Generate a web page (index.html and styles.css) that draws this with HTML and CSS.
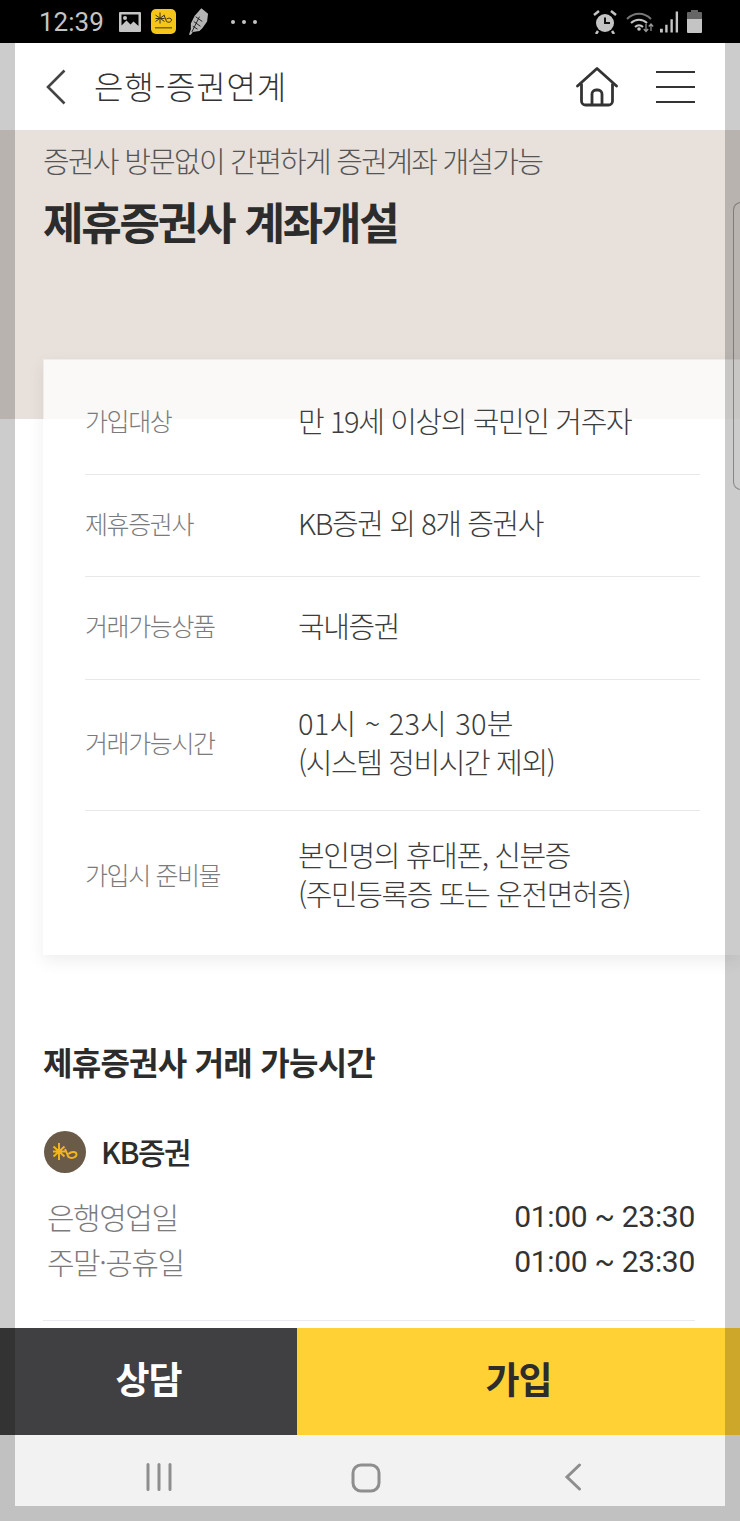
FILE: index.html
```html
<!DOCTYPE html>
<html lang="ko">
<head>
  <meta charset="UTF-8">
  <meta name="viewport" content="width=device-width, initial-scale=1.0">
  <title>제휴증권사 계좌개설</title>
  <link rel="stylesheet" href="styles.css">
</head>
<body>
  <div class="phone">
    <div class="status-bar">
      <span class="clock">12:39</span>
      <svg class="st-pic" viewBox="0 0 22 20"><path fill="#c4c4c4" fill-rule="evenodd" d="M1 0h20a1 1 0 0 1 1 1v18a1 1 0 0 1-1 1H1a1 1 0 0 1-1-1V1a1 1 0 0 1 1-1zm1.500 2.500v11l5-5 4 4 3-3 5 4.500V2.500z"/><circle cx="6" cy="6" r="2" fill="#c4c4c4"/></svg>
      <svg class="st-kb" viewBox="0 0 25 25"><rect width="25" height="25" rx="5" fill="#f5c518"/><path d="M9 3.500v11M4.500 6l9 6.500M13.500 6l-9 6.500M4.500 9.500h9" stroke="#3c3320" stroke-width="1" fill="none"/><path d="M13 6l2.500 6.500c2 1.500 5 .5 5-1.500s-3-2.500-5-1" stroke="#3c3320" stroke-width="1" fill="none"/><rect x="4" y="18" width="17" height="1.500" fill="#7a6620"/></svg>
      <svg class="st-feather" viewBox="0 0 22 28"><path fill="#b5b5b5" d="M14 0l7 6-1 8-5 7-3 3-7 1-2 3H1l2-6v-6l4-8z"/><path d="M4 25L12 9M8 9l7 5M6 14l7 5M5 19l5 3" stroke="#222" stroke-width="1" fill="none"/></svg>
      <span class="st-dots"><i></i><i></i><i></i></span>
      <span class="st-right">
        <svg class="st-alarm" viewBox="0 0 24 24"><circle cx="12" cy="13" r="9" fill="#c4c4c4"/><path d="M12 7.500V13h5" stroke="#111" stroke-width="2" fill="none"/><path d="M1 5l5-4M23 5l-5-4M5 21l-2 3M19 21l2 3" stroke="#c4c4c4" stroke-width="2.500" fill="none"/></svg>
        <svg class="st-wifi" viewBox="0 0 28 22"><path d="M1 8c7-7 17-7 24 0" stroke="#777" stroke-width="2" fill="none"/><path d="M5 12c4.500-4.500 11.500-4.500 16 0M9 16c2.500-2.500 5.500-2.500 8 0" stroke="#c4c4c4" stroke-width="2" fill="none"/><circle cx="13" cy="18" r="1.800" fill="#c4c4c4"/><path d="M20 13v7M17.800 18l2.200 2.500 2.200-2.500M25 20v-7M22.800 15.500l2.200-2.500 2.200 2.500" stroke="#999" stroke-width="1.200" fill="none"/></svg>
        <svg class="st-signal" viewBox="0 0 20 22"><path fill="#c4c4c4" d="M0 18h3v4H0zM5.500 14h2.500v8H5.500zM11 8h2.500v14H11zM16.500 0H19v22h-2.500z"/></svg>
        <svg class="st-batt" viewBox="0 0 15 23"><path fill="#666" d="M4 0h7v2h3a1 1 0 0 1 1 1v6H0V3a1 1 0 0 1 1-1h3z"/><path fill="#c4c4c4" d="M0 9h15v13a1 1 0 0 1-1 1H1a1 1 0 0 1-1-1z"/></svg>
      </span>
    </div>

    <header class="app-header">
      <svg class="back-icon" viewBox="0 0 20 36"><path d="M18.500 1.500L2 18l16.500 16.500" stroke="#444" stroke-width="2.600" fill="none"/></svg>
      <h1 class="page-title">은행-증권연계</h1>
      <svg class="home-icon" viewBox="0 0 42 40"><path d="M1.500 19L21 1.500 40.500 19" stroke="#333" stroke-width="2.800" fill="none" stroke-linecap="round" stroke-linejoin="round"/><path d="M5.500 16.500V34a4 4 0 0 0 4 4h23a4 4 0 0 0 4-4V16.500" stroke="#333" stroke-width="2.800" fill="none"/><path d="M16 38V27a4 4 0 0 1 4-4h2a4 4 0 0 1 4 4v11" stroke="#333" stroke-width="2.800" fill="none"/></svg>
      <div class="menu-icon"><i></i><i></i><i></i></div>
    </header>

    <main class="content">
      <section class="band">
        <p class="band-sub">증권사 방문없이 간편하게 증권계좌 개설가능</p>
        <h2 class="band-title">제휴증권사 계좌개설</h2>
      </section>

      <section class="info-card">
        <div class="info-row">
          <div class="info-label">가입대상</div>
          <div class="info-value">만 19세 이상의 국민인 거주자</div>
        </div>
        <div class="info-row">
          <div class="info-label">제휴증권사</div>
          <div class="info-value">KB증권 외 8개 증권사</div>
        </div>
        <div class="info-row">
          <div class="info-label">거래가능상품</div>
          <div class="info-value">국내증권</div>
        </div>
        <div class="info-row tall">
          <div class="info-label">거래가능시간</div>
          <div class="info-value"><span class="wide">01시 ~ 23시 30분</span><br>(시스템 정비시간 제외)</div>
        </div>
        <div class="info-row last">
          <div class="info-label">가입시 준비물</div>
          <div class="info-value">본인명의 휴대폰, 신분증<br>(주민등록증 또는 운전면허증)</div>
        </div>
      </section>

      <section class="hours">
        <h3 class="hours-title">제휴증권사 거래 가능시간</h3>
        <div class="broker">
          <svg class="broker-logo" viewBox="0 0 42 42"><circle cx="21" cy="21" r="21" fill="#6a5a48"/><path d="M15 12v17M9.500 15.500l11 10M20.500 15.500l-11 10M9 20.500h12" stroke="#f2b71c" stroke-width="1.900" fill="none"/><path d="M21 18l3.500 8c3 2 8 .5 8-2.500s-5-3.500-8-.5" stroke="#f2b71c" stroke-width="1.900" fill="none"/></svg>
          <span class="broker-name">KB증권</span>
        </div>
        <div class="hours-row"><span>은행영업일</span><span class="hours-time">01:00 ~ 23:30</span></div>
        <div class="hours-row"><span>주말·공휴일</span><span class="hours-time">01:00 ~ 23:30</span></div>
        <div class="hours-line"></div>
      </section>
    </main>

    <div class="action-bar">
      <div class="btn-consult">상담</div>
      <div class="btn-join">가입</div>
    </div>

    <nav class="nav-bar">
      <svg class="nav-recent" viewBox="0 0 28 28"><path d="M3 1.500v25M14 1.500v25M25 1.500v25" stroke="#8e8e8e" stroke-width="3" stroke-linecap="round"/></svg>
      <svg class="nav-home" viewBox="0 0 30 30"><rect x="2" y="2" width="26" height="26" rx="8" stroke="#8e8e8e" stroke-width="3" fill="none"/></svg>
      <svg class="nav-back" viewBox="0 0 18 28"><path d="M15.500 2L3 14l12.500 12" stroke="#8e8e8e" stroke-width="3" stroke-linecap="round" fill="none"/></svg>
    </nav>

    <div class="edge-handle"></div>
    <div class="dim-frame"></div>
  </div>
</body>
</html>
```

FILE: styles.css
```css
* {
  box-sizing: border-box;
}

body {
  margin: 0;
  background: #fff;
  font-family: "Noto Sans CJK KR", "Noto Sans", sans-serif;
}

.phone {
  position: relative;
  display: flex;
  flex-direction: column;
  width: 740px;
  height: 1521px;
  overflow: hidden;
  background: #fff;
}

/* status bar */
.status-bar {
  display: flex;
  align-items: center;
  flex: none;
  height: 43px;
  padding: 0 38px 0 39px;
  background: #000;
}

.clock {
  width: 80px;
  font-family: Roboto, sans-serif;
  font-size: 26px;
  color: #c4c4c4;
}

.st-pic {
  width: 22px;
  height: 20px;
}

.st-kb {
  width: 25px;
  height: 25px;
  margin-left: 10px;
}

.st-feather {
  width: 21px;
  height: 27px;
  margin-left: 12px;
}

.st-dots {
  display: flex;
  gap: 7px;
  margin-left: 22px;
}

.st-dots i {
  width: 4px;
  height: 4px;
  border-radius: 50%;
  background: #c4c4c4;
}

.st-right {
  display: flex;
  align-items: center;
  margin-left: auto;
}

.st-alarm {
  width: 24px;
  height: 24px;
}

.st-wifi {
  width: 28px;
  height: 22px;
  margin-left: 9px;
}

.st-signal {
  width: 19px;
  height: 22px;
  margin-left: 6px;
}

.st-batt {
  width: 15px;
  height: 23px;
  margin-left: 8px;
}

/* header */
.app-header {
  display: flex;
  align-items: center;
  flex: none;
  height: 87px;
  padding: 0 45px 0 46px;
  background: #fff;
}

.back-icon {
  width: 20px;
  height: 36px;
}

.page-title {
  margin: 0 0 4px 28px;
  font-size: 32px;
  font-weight: 300;
  letter-spacing: 0.800px;
  color: #333;
}

.home-icon {
  width: 42px;
  height: 40px;
  margin-left: auto;
}

.menu-icon {
  display: flex;
  flex-direction: column;
  gap: 13px;
  width: 39px;
  margin-left: 38px;
}

.menu-icon i {
  height: 2px;
  background: #333;
}

/* content */
.content {
  flex: 1;
  min-height: 0;
  overflow: hidden;
}

.band {
  height: 289px;
  padding-top: 9px;
  padding-left: 43px;
  background: #e7e0db;
}

.band-sub {
  margin: 0;
  font-size: 29px;
  font-weight: 300;
  line-height: 42px;
  letter-spacing: -1.750px;
  color: #555;
}

.band-title {
  margin: 10px 0 0;
  font-size: 44px;
  font-weight: 700;
  line-height: 60px;
  letter-spacing: -2.200px;
  color: #2c2c2c;
}

.info-card {
  margin: -60px 0 0 43px;
  padding: 12px 40px 15px 41px;
  border: 1px solid rgba(255, 255, 255, 0.4);
  border-right: 0;
  background: rgba(255, 255, 255, 0.8);
  background-clip: padding-box;
  box-shadow: 0 6px 16px rgba(0, 0, 0, 0.07);
}

.info-row {
  display: flex;
  align-items: center;
  height: 102.500px;
  padding-bottom: 5px;
  border-bottom: 1px solid #e8e8e8;
}

.info-row.tall {
  height: 131px;
}

.info-row.last {
  height: 128px;
  padding-bottom: 2px;
  border-bottom: 0;
}

.info-label {
  width: 213px;
  font-size: 25px;
  font-weight: 300;
  letter-spacing: -1.400px;
  color: #7b7b7e;
}

.info-value {
  font-size: 29px;
  font-weight: 300;
  line-height: 39px;
  letter-spacing: -1.400px;
  color: #3d3d3d;
}

.wide {
  letter-spacing: 0.200px;
}

.hours {
  padding: 0 45px 0 43px;
}

.hours-title {
  margin: 82px 0 0;
  font-size: 32px;
  font-weight: 700;
  line-height: 48px;
  letter-spacing: -0.750px;
  color: #2c2c2c;
}

.broker {
  display: flex;
  align-items: center;
  margin-top: 44px;
  margin-left: 1px;
}

.broker-logo {
  width: 42px;
  height: 42px;
}

.broker-name {
  margin-bottom: 2px;
  margin-left: 15px;
  font-size: 30px;
  font-weight: 500;
  letter-spacing: -1.500px;
  color: #2c2c2c;
}

.hours-row {
  display: flex;
  justify-content: space-between;
  align-items: center;
  height: 45px;
  padding-left: 4px;
  font-size: 30px;
  font-weight: 300;
  letter-spacing: -1.500px;
  color: #7b7b7e;
}

.broker + .hours-row {
  margin-top: 19px;
}

.hours-time {
  font-family: Roboto, sans-serif;
  font-weight: 400;
  letter-spacing: -0.300px;
  color: #333;
}

.hours-line {
  height: 1px;
  margin-top: 36px;
  background: #e8eaee;
}

/* buttons */
.action-bar {
  display: flex;
  flex: none;
  height: 107px;
}

.btn-consult,
.btn-join {
  display: flex;
  align-items: center;
  justify-content: center;
  padding-bottom: 7px;
  font-size: 37px;
  font-weight: 700;
  letter-spacing: -1px;
}

.btn-consult {
  width: 297px;
  background: #404042;
  color: #fff;
}

.btn-join {
  flex: 1;
  background: #ffd135;
  color: #2c2c2c;
}

/* android nav */
.nav-bar {
  position: relative;
  flex: none;
  height: 86px;
  background: #f2f2f2;
}

.nav-recent,
.nav-home,
.nav-back {
  position: absolute;
  top: 28px;
}

.nav-recent {
  left: 145px;
  width: 28px;
  height: 28px;
}

.nav-home {
  left: 351px;
  width: 30px;
  height: 30px;
}

.nav-back {
  left: 564px;
  width: 18px;
  height: 28px;
}

/* overlays */
.dim-frame {
  position: absolute;
  top: 43px;
  right: 0;
  bottom: 0;
  left: 0;
  border: 15px solid rgba(0, 0, 0, 0.2);
  border-top: 0;
  pointer-events: none;
}

.edge-handle {
  position: absolute;
  top: 202px;
  right: -10px;
  width: 17px;
  height: 288px;
  border: 1px solid rgba(110, 110, 110, 0.6);
  border-radius: 8px;
  background: rgba(255, 255, 255, 0.06);
}
```
